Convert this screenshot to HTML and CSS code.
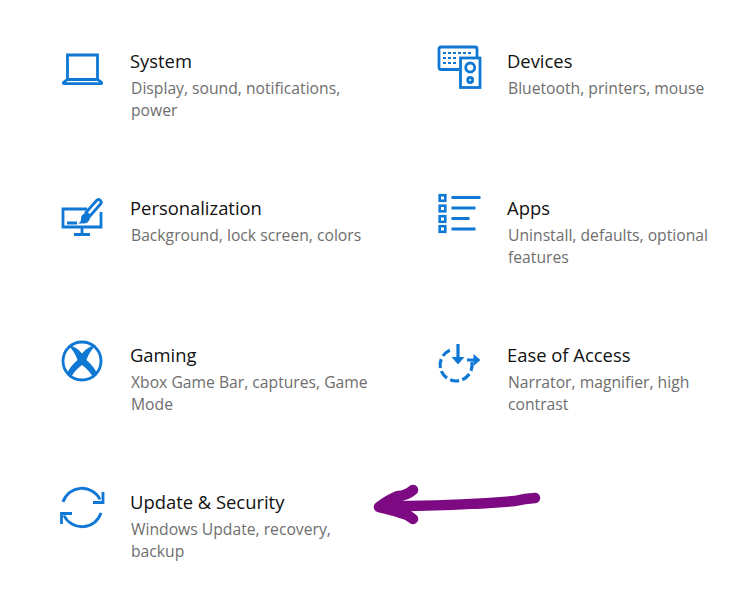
FILE: index.html
```html
<!DOCTYPE html>
<html>
<head>
  <title>Settings</title>
  <link rel="stylesheet" href="styles.css">
</head>
<body>
  <div class="settings">
    <div class="item">
      <svg class="icon" viewBox="0 0 44 44">
        <path d="M7.500 33V8h30v25"/>
        <path d="M7.500 32.500h30l4 3q.6 1-.6 1.200H4.100q-1.200-.2-.6-1.200z"/>
      </svg>
      <div class="text">
        <div class="title">System</div>
        <div class="desc">Display, sound, notifications, power</div>
      </div>
    </div>
    <div class="item">
      <svg class="icon" viewBox="0 0 44 44">
        <path d="M22 22.500H4q-2 0-2-2V2q0-2 2-2h34q2 0 2 2v8"/>
        <path class="dots" d="M6 6h3M11 6h3M16 6h3M21 6h3M26 6h3M31 6h3M6 11h3M11 11h3M16 11h3M6 16h3M11 16h3M16 16h3"/>
        <rect x="23.500" y="11" width="19.500" height="29.500"/>
        <circle cx="33.200" cy="20.500" r="4.500"/>
        <circle cx="33.200" cy="33" r="2.500"/>
      </svg>
      <div class="text">
        <div class="title">Devices</div>
        <div class="desc">Bluetooth, printers, mouse</div>
      </div>
    </div>
    <div class="item">
      <svg class="icon" viewBox="0 0 44 44">
        <path d="M27 15H3v18h38V18"/>
        <path d="M22 33v7M14 40.500h16M7 29h10"/>
        <path d="M26 18.500 36.500 6.500q2.500-2 4 0t0 3.500L30 22z"/>
        <path class="solid" d="M24.500 19.500q4 0 5.500 4.500-1 5-6 5.500h-6q3.500-1.500 3-5.500.5-3.500 3.500-4.500z"/>
      </svg>
      <div class="text">
        <div class="title">Personalization</div>
        <div class="desc">Background, lock screen, colors</div>
      </div>
    </div>
    <div class="item">
      <svg class="icon" viewBox="0 0 44 44">
        <rect class="box" x="2.700" y="1.200" width="5.600" height="5.600"/>
        <rect class="box" x="2.700" y="11.700" width="5.600" height="5.600"/>
        <rect class="box" x="2.700" y="22.200" width="5.600" height="5.600"/>
        <rect class="box" x="2.700" y="32.200" width="5.600" height="5.600"/>
        <path d="M14.500 3.500h29M14.500 14h24M14.500 24.500h18M14.500 35h24"/>
      </svg>
      <div class="text">
        <div class="title">Apps</div>
        <div class="desc">Uninstall, defaults, optional features</div>
      </div>
    </div>
    <div class="item">
      <svg class="icon" viewBox="0 0 44 44">
        <circle cx="22" cy="20" r="19"/>
        <path class="solid" d="M8 4Q16 5 22 12.500 28 5 36 4 29 11 26.500 19 33.500 25 37.500 33L33.500 37Q29 29 22 24 15 29 10.500 37L6.500 33Q10.500 25 17.500 19 15 11 8 4z"/>
      </svg>
      <div class="text">
        <div class="title">Gaming</div>
        <div class="desc">Xbox Game Bar, captures, Game Mode</div>
      </div>
    </div>
    <div class="item">
      <svg class="icon" viewBox="0 0 44 44">
        <path class="dash" d="M34.800 21A16 16 0 1 1 14 8.800"/>
        <path class="thick" d="M21 3v15M30 19h8"/>
        <path class="solid" d="M14.500 16h13L21 23.500zM36.500 13l7 6-7 6z"/>
      </svg>
      <div class="text">
        <div class="title">Ease of Access</div>
        <div class="desc">Narrator, magnifier, high contrast</div>
      </div>
    </div>
    <div class="item">
      <svg class="icon" viewBox="0 0 44 44">
        <path d="M3 14A20 20 0 0 1 40 11.500"/>
        <path d="M43 4v10.500H33"/>
        <path d="M41 25A20 20 0 0 1 4 27.500"/>
        <path d="M1.500 36V25.500H12"/>
      </svg>
      <div class="text">
        <div class="title">Update &amp; Security</div>
        <div class="desc">Windows Update, recovery, backup</div>
      </div>
    </div>
  </div>

  <svg class="arrow" viewBox="0 0 175 45">
    <path d="M165 15q-10 .5-20 3-50 4-105 5-15 0-31 1M9 24Q20 16 28 13q8 0 15-6M9 24q14 3 22 6 6 1 12 6"/>
  </svg>
</body>
</html>
```

FILE: styles.css
```css
body {
  margin: 0;
  background: #fff;
  font-family: "Open Sans", sans-serif;
}
.settings {
  display: grid;
  grid-template-columns: 377px 1fr;
  grid-template-rows: repeat(3, 147px) auto;
  padding: 47px 0 0 60px;
}
.item {
  display: flex;
  gap: 26px;
}
.icon {
  width: 44px;
  height: 44px;
  flex: none;
  overflow: visible;
  fill: none;
  stroke: #0f78d4;
  stroke-width: 2.800;
}
.icon .dots {
  stroke-width: 2;
}
.icon .box {
  stroke-width: 2.600;
  fill: #fff;
}
.icon .solid {
  fill: #0f78d4;
  stroke: none;
}
.icon .dash {
  stroke-width: 3.200;
  stroke-dasharray: 9 3.500;
}
.icon .thick {
  stroke-width: 3.200;
}
.text {
  width: 240px;
  margin-top: 1px;
}
.title {
  font-size: 18.400px;
  line-height: 26px;
  color: #111;
}
.desc {
  margin: 3px 0 0 1px;
  font-size: 15.700px;
  line-height: 22px;
  color: #6e6e6e;
}
.arrow {
  position: absolute;
  left: 370px;
  top: 483px;
  width: 175px;
  height: 45px;
  fill: none;
  stroke: #7d0a82;
  stroke-width: 10.500;
  stroke-linecap: round;
  stroke-linejoin: round;
}
```
